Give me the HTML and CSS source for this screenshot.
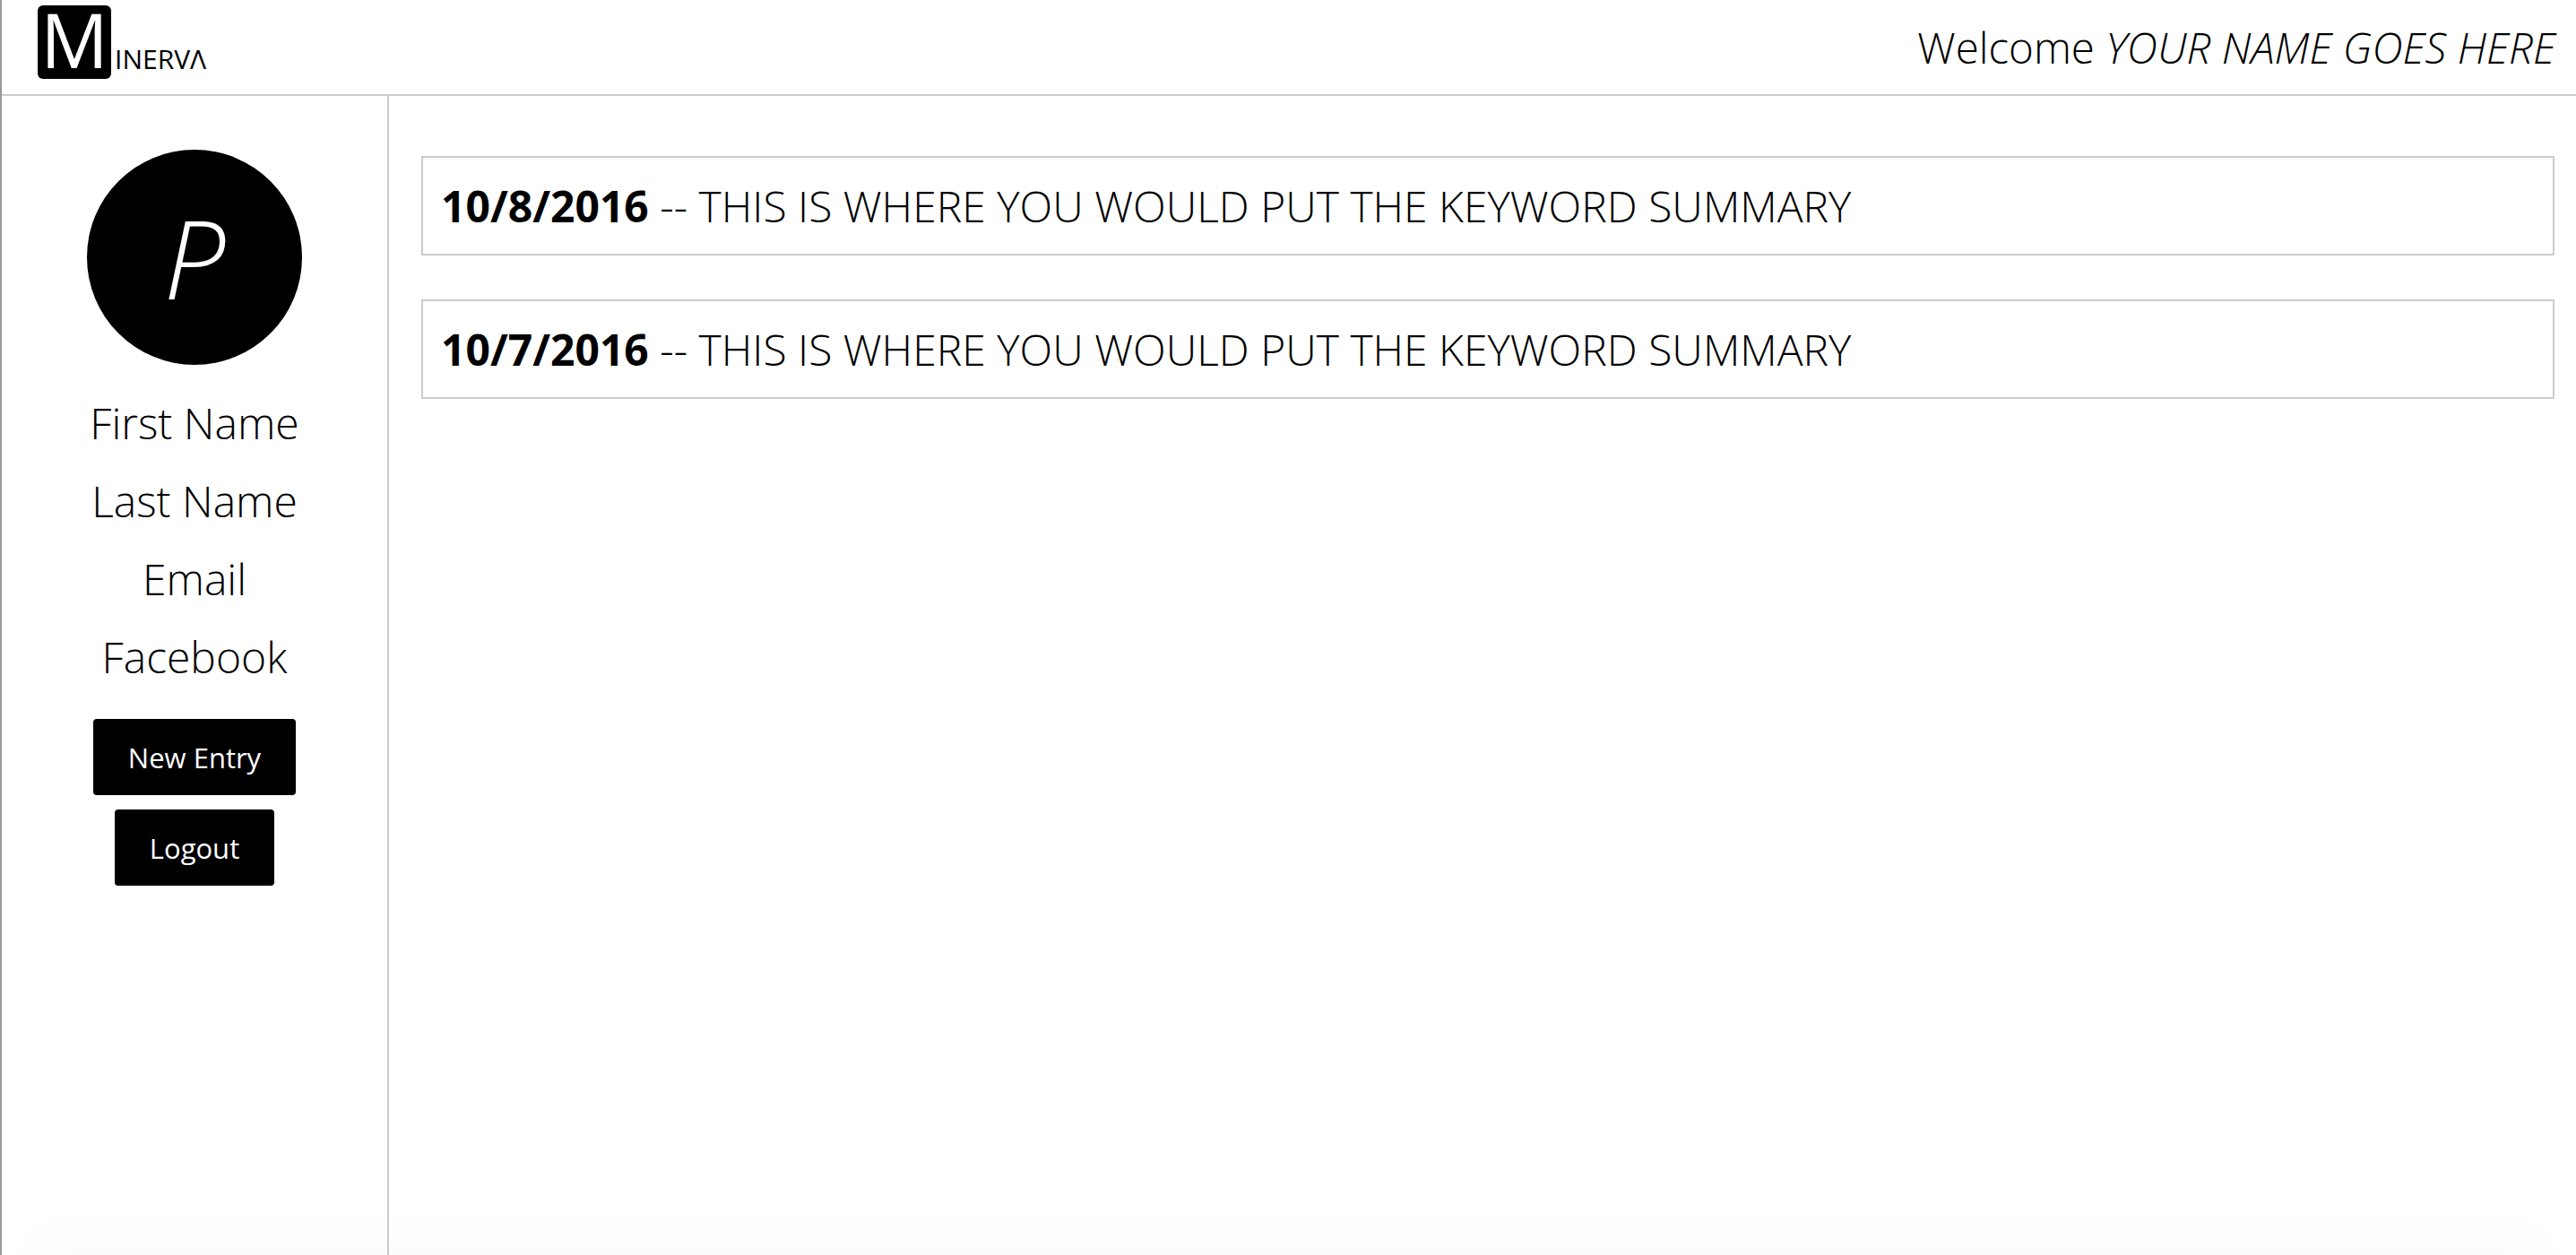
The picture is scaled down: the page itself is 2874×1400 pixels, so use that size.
FILE: index.html
```html
<!DOCTYPE html>
<html lang="en">
<head>
  <meta charset="UTF-8">
  <title>Minerva</title>
  <link rel="stylesheet" href="styles.css">
</head>
<body>
  <div class="page">
    <header class="topbar">
      <div class="logo">
        <span class="logo-box">M</span>
        <span class="logo-rest">INERVΛ</span>
      </div>
      <div class="welcome">Welcome <em>YOUR NAME GOES HERE</em></div>
    </header>
    <div class="main">
      <aside class="sidebar">
        <div class="avatar">P</div>
        <p class="info">First Name</p>
        <p class="info">Last Name</p>
        <p class="info">Email</p>
        <p class="info">Facebook</p>
        <button class="btn btn-new">New Entry</button>
        <button class="btn">Logout</button>
      </aside>
      <section class="entries">
        <div class="entry"><b>10/8/2016</b> -- THIS IS WHERE YOU WOULD PUT THE KEYWORD SUMMARY</div>
        <div class="entry"><b>10/7/2016</b> -- THIS IS WHERE YOU WOULD PUT THE KEYWORD SUMMARY</div>
      </section>
    </div>
  </div>
</body>
</html>
```

FILE: styles.css
```css
* {
  box-sizing: border-box;
}
html, body {
  height: 100%;
}
body {
  margin: 0;
  background: #ffffff;
  color: #000000;
  font-family: "Open Sans", sans-serif;
  font-weight: 300;
  overflow: hidden;
}
/* faint shadow along the bottom of the window */
body::after {
  content: "";
  position: fixed;
  left: 40px;
  right: 40px;
  bottom: -10px;
  height: 10px;
  box-shadow: 0 0 60px rgba(0, 0, 0, 0.1);
  pointer-events: none;
}
.page {
  height: 100%;
  display: flex;
  flex-direction: column;
  border-left: 2px solid #999999;
}
.topbar {
  height: 107px;
  flex: none;
  display: flex;
  justify-content: space-between;
  border-bottom: 2px solid #cccccc;
  padding: 6px 23px 0 40px;
}
.logo {
  display: flex;
  align-items: flex-end;
  height: 82px;
}
.logo-box {
  width: 82px;
  height: 82px;
  background: #000000;
  color: #ffffff;
  border-radius: 6px;
  font-size: 84px;
  font-weight: 400;
  line-height: 76px;
  text-align: center;
}
.logo-rest {
  font-size: 30px;
  line-height: 30px;
  font-weight: 400;
  margin: 0 0 7px 4px;
}
.welcome {
  font-size: 47.5px;
  line-height: 94px;
}
.welcome em {
  font-style: italic;
}
.main {
  flex: 1;
  display: flex;
}
.sidebar {
  width: 432px;
  flex: none;
  border-right: 2px solid #cccccc;
  display: flex;
  flex-direction: column;
  align-items: center;
  padding-top: 60px;
}
.avatar {
  width: 240px;
  height: 240px;
  border-radius: 50%;
  background: #000000;
  color: #ffffff;
  font-size: 122px;
  font-style: italic;
  line-height: 240px;
  text-align: center;
  margin-bottom: 21px;
}
.info {
  margin: 0;
  font-size: 48px;
  line-height: 87px;
}
.btn {
  display: block;
  height: 85px;
  padding: 0 39px;
  background: #000000;
  color: #ffffff;
  border: none;
  border-radius: 4px;
  font-family: "Open Sans", sans-serif;
  font-weight: 400;
  font-size: 31px;
  margin-bottom: 16px;
}
.btn-new {
  margin-top: 26px;
}
.entries {
  flex: 1;
  padding: 67px 24px 0 36px;
  display: flex;
  flex-direction: column;
  gap: 49px;
}
.entry {
  height: 111px;
  border: 2px solid #cccccc;
  padding-left: 20px;
  font-size: 48px;
  line-height: 107px;
}
.entry b {
  font-weight: 700;
}
```
